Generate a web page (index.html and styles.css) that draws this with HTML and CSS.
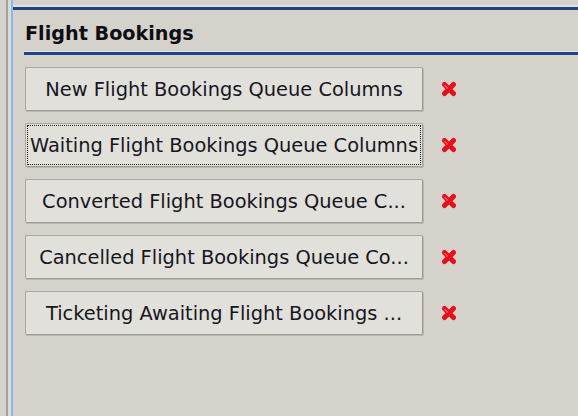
FILE: index.html
```html
<!DOCTYPE html>
<html>
<head>
<meta charset="utf-8">
<link rel="stylesheet" href="styles.css">
</head>
<body>
<div class="window">
  <div class="gutter"></div>
  <div class="panel">
    <div class="topline"></div>
    <h1 class="title">Flight Bookings</h1>
    <div class="titleline"></div>
    <div class="list">
      <div class="row">
        <div class="btn"><span class="label">New Flight Bookings Queue Columns</span></div>
        <svg class="del" viewBox="0 0 16 16" width="16" height="16"><path d="M3.5 3.5 L12.5 12.5 M12.5 3.5 L3.5 12.5" stroke="#e3101e" stroke-width="5" stroke-linecap="round"/><path d="M4 4.5 L6.5 7" stroke="#ff5a60" stroke-width="1.3" stroke-linecap="round"/></svg>
      </div>
      <div class="row">
        <div class="btn focus"><span class="label">Waiting Flight Bookings Queue Columns</span></div>
        <svg class="del" viewBox="0 0 16 16" width="16" height="16"><path d="M3.5 3.5 L12.5 12.5 M12.5 3.5 L3.5 12.5" stroke="#e3101e" stroke-width="5" stroke-linecap="round"/><path d="M4 4.5 L6.5 7" stroke="#ff5a60" stroke-width="1.3" stroke-linecap="round"/></svg>
      </div>
      <div class="row">
        <div class="btn"><span class="label">Converted Flight Bookings Queue C...</span></div>
        <svg class="del" viewBox="0 0 16 16" width="16" height="16"><path d="M3.5 3.5 L12.5 12.5 M12.5 3.5 L3.5 12.5" stroke="#e3101e" stroke-width="5" stroke-linecap="round"/><path d="M4 4.5 L6.5 7" stroke="#ff5a60" stroke-width="1.3" stroke-linecap="round"/></svg>
      </div>
      <div class="row">
        <div class="btn"><span class="label">Cancelled Flight Bookings Queue Co...</span></div>
        <svg class="del" viewBox="0 0 16 16" width="16" height="16"><path d="M3.5 3.5 L12.5 12.5 M12.5 3.5 L3.5 12.5" stroke="#e3101e" stroke-width="5" stroke-linecap="round"/><path d="M4 4.5 L6.5 7" stroke="#ff5a60" stroke-width="1.3" stroke-linecap="round"/></svg>
      </div>
      <div class="row">
        <div class="btn"><span class="label">Ticketing Awaiting Flight Bookings ...</span></div>
        <svg class="del" viewBox="0 0 16 16" width="16" height="16"><path d="M3.5 3.5 L12.5 12.5 M12.5 3.5 L3.5 12.5" stroke="#e3101e" stroke-width="5" stroke-linecap="round"/><path d="M4 4.5 L6.5 7" stroke="#ff5a60" stroke-width="1.3" stroke-linecap="round"/></svg>
      </div>
    </div>
  </div>
</div>
</body>
</html>
```
FILE: styles.css
```css
html, body {
  margin: 0;
  padding: 0;
  background: #d5d2cb;
}
.window {
  display: flex;
  width: 578px;
  height: 416px;
  overflow: hidden;
  font-family: "DejaVu Sans", Verdana, sans-serif;
}
.gutter {
  width: 6px;
  flex: none;
  background: #d5d2cb;
  border-right: 2px solid #a3a19c;
}
.panel {
  flex: 1;
  border-left: 3px solid #dcdad4;
  box-shadow: inset 2px 0 0 #8db7e6;
  padding-left: 3px;
  display: flex;
  flex-direction: column;
  background: #d5d2cb;
}
.topline {
  margin-top: 7px;
  height: 3px;
  box-shadow: 0 -2px 0 #e2e0da;
  background: #22438a;
  margin-left: -1px;
}
.title {
  margin: 13px 0 0 11px;
  font-size: 19.2px;
  font-weight: bold;
  color: #0e0e14;
  line-height: 22px;
  height: 22px;
}
.titleline {
  margin: 7px 0 0 10px;
  height: 3px;
  background: #22438a;
  box-shadow: 0 -1px 0 #e4e2dc;
}
.list {
  margin: 12px 0 0 11px;
  display: flex;
  flex-direction: column;
  gap: 12px;
}
.row {
  display: flex;
  align-items: center;
  gap: 18px;
}
.btn {
  width: 396px;
  height: 42px;
  border: 1px solid #a9a7a2;
  border-right-color: #9c9a95;
  border-bottom-color: #9c9a95;
  box-shadow: 1px 1px 0 #b9b7b1;
  background: #e2e0da;
  border-radius: 2px;
  display: flex;
  align-items: center;
  justify-content: center;
  white-space: nowrap;
  font-size: 19.4px;
  color: #161622;
  position: relative;
}
.btn.focus::after {
  content: "";
  position: absolute;
  inset: 1px;
  border: 1px dotted #1a1a1a;
}
.label {
  overflow: visible;
}
.del {
  flex: none;
}
```
